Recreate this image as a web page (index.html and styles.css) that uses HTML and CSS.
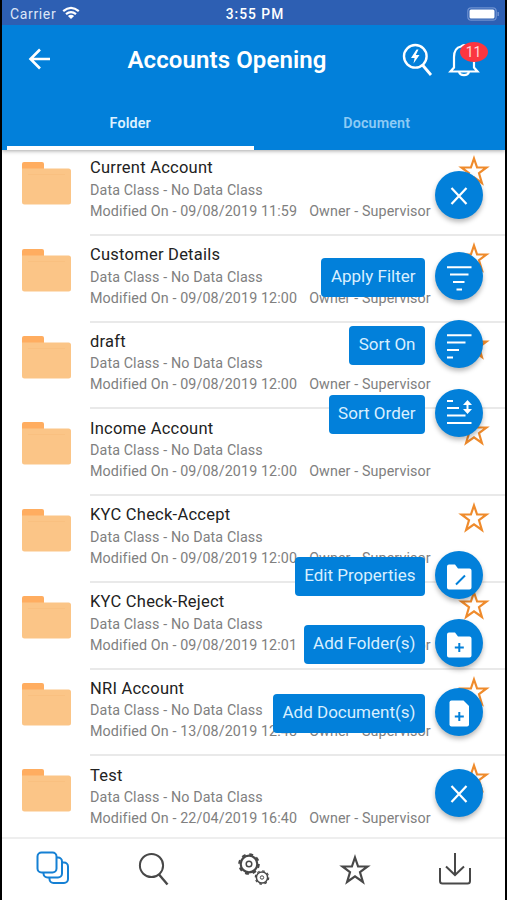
FILE: index.html
```html
<!DOCTYPE html>
<html lang="en">
<head>
<meta charset="utf-8">
<title>Accounts Opening</title>
<link rel="stylesheet" href="styles.css">
</head>
<body>
<svg class="defs" width="0" height="0" aria-hidden="true">
  <symbol id="folder" viewBox="0 0 50 44"><path d="M2 0H20Q22 0 22 2V12H0V2Q0 0 2 0Z" fill="#ffad60"/><path d="M0 6.500H46.500Q49 6.500 49 9V40Q49 42.500 46.500 42.500H2.500Q0 42.500 0 40Z" fill="#fbc587"/><path d="M6 12.500H43" stroke="#f9c080" stroke-width="1"/></symbol>
  <symbol id="star" viewBox="0 0 32 32"><path d="M16 3.500L19.100 12.500H28.500L21 18.200L23.900 28L16 22.300L8.100 28L11 18.200L3.500 12.500H12.900Z" fill="none" stroke="currentColor" stroke-width="2.200"/></symbol>
  <symbol id="close" viewBox="0 0 48 48"><path d="M16.500 17L31.500 33M31.500 17L16.500 33" fill="none" stroke="#fff" stroke-width="2.200"/></symbol>
</svg>
<div class="phone">
  <header class="top">
    <div class="status">
      <span class="carrier">Carrier
        <svg class="wifi" width="18" height="14" viewBox="0 0 18 14" fill="none" stroke="#fff" stroke-width="2.200"><path d="M1.200 5.200Q9-1.600 16.800 5.200M4 8.200Q9 3.900 14 8.200"/><path d="M9 13L5.900 10Q9 7.400 12.100 10Z" fill="#fff" stroke="none"/></svg>
      </span>
      <span class="time">3:55 PM</span>
      <svg class="battery" width="33" height="16" viewBox="0 0 33 16"><rect x=".8" y="1.800" width="28.400" height="12.400" rx="3.500" fill="none" stroke="#6e91d0" stroke-width="1.200"/><rect x="2.500" y="3.500" width="25" height="9" rx="1.500" fill="#fff"/><path d="M31.200 6V10" stroke="#6e91d0" stroke-width="1.500"/></svg>
    </div>
    <div class="bar">
      <svg class="back" width="24" height="24" viewBox="0 0 24 24" fill="none" stroke="#fff" stroke-width="2.600"><path d="M13 2.500L3.500 12L13 21.500M3.500 12H23"/></svg>
      <h1>Accounts Opening</h1>
      <svg class="quick" width="32" height="36" viewBox="0 0 32 36" fill="none" stroke="#fff" stroke-width="2.400"><circle cx="13.300" cy="15.300" r="11.300"/><path d="M20.500 24L29 34" stroke-width="2.800"/><path d="M14.500 8.500L9 17H12.600L11.500 22.500L17.500 14H13.800L16.500 8.500Z" fill="#fff" stroke="none"/></svg>
      <div class="alerts">
        <svg width="32" height="36" viewBox="0 0 32 36" fill="none" stroke="#fff" stroke-width="2.200"><path d="M2.500 29.500H29.500L26 25.500V15Q26 6 19 4.500Q16 2 13 4.500Q6 6 6 15V25.500Z"/><path d="M11 30Q12 33.200 16 33.200T21 30"/></svg>
        <span class="badge">11</span>
      </div>
    </div>
    <nav class="tabs"><a class="tab active"><span>Folder</span></a><a class="tab"><span>Document</span></a></nav>
  </header>
  <main class="list">
    <article class="row"><svg class="folder"><use href="#folder"/></svg><div class="info"><h2>Current Account</h2><p>Data Class - No Data Class</p><p class="meta"><span>Modified On - 09/08/2019 11:59</span><span>Owner - Supervisor</span></p></div><svg class="star"><use href="#star"/></svg></article>
    <article class="row"><svg class="folder"><use href="#folder"/></svg><div class="info"><h2>Customer Details</h2><p>Data Class - No Data Class</p><p class="meta"><span>Modified On - 09/08/2019 12:00</span><span>Owner - Supervisor</span></p></div><svg class="star"><use href="#star"/></svg></article>
    <article class="row"><svg class="folder"><use href="#folder"/></svg><div class="info"><h2>draft</h2><p>Data Class - No Data Class</p><p class="meta"><span>Modified On - 09/08/2019 12:00</span><span>Owner - Supervisor</span></p></div><svg class="star"><use href="#star"/></svg></article>
    <article class="row"><svg class="folder"><use href="#folder"/></svg><div class="info"><h2>Income Account</h2><p>Data Class - No Data Class</p><p class="meta"><span>Modified On - 09/08/2019 12:00</span><span>Owner - Supervisor</span></p></div><svg class="star"><use href="#star"/></svg></article>
    <article class="row"><svg class="folder"><use href="#folder"/></svg><div class="info"><h2>KYC Check-Accept</h2><p>Data Class - No Data Class</p><p class="meta"><span>Modified On - 09/08/2019 12:00</span><span>Owner - Supervisor</span></p></div><svg class="star"><use href="#star"/></svg></article>
    <article class="row"><svg class="folder"><use href="#folder"/></svg><div class="info"><h2>KYC Check-Reject</h2><p>Data Class - No Data Class</p><p class="meta"><span>Modified On - 09/08/2019 12:01</span><span>Owner - Supervisor</span></p></div><svg class="star"><use href="#star"/></svg></article>
    <article class="row"><svg class="folder"><use href="#folder"/></svg><div class="info"><h2>NRI Account</h2><p>Data Class - No Data Class</p><p class="meta"><span>Modified On - 13/08/2019 12:48</span><span>Owner - Supervisor</span></p></div><svg class="star"><use href="#star"/></svg></article>
    <article class="row"><svg class="folder"><use href="#folder"/></svg><div class="info"><h2>Test</h2><p>Data Class - No Data Class</p><p class="meta"><span>Modified On - 22/04/2019 16:40</span><span>Owner - Supervisor</span></p></div><svg class="star"><use href="#star"/></svg></article>
  </main>
  <footer class="dock">
    <svg width="34" height="34" viewBox="0 0 34 34" fill="#fff" stroke="#1580d4" stroke-width="2"><rect x="13.500" y="11.500" width="18.500" height="20.500" rx="4"/><rect x="7.500" y="6.500" width="18.500" height="20" rx="4"/><rect x="1.500" y="1.500" width="19" height="20" rx="4"/></svg>
    <svg class="i-search" width="34" height="34" viewBox="0 0 34 34" fill="none" stroke="#484848" stroke-width="2"><circle cx="14.500" cy="13.500" r="11.600"/><path d="M22 22.500L30.500 32.500" stroke-width="2.400"/></svg>
    <svg class="i-gears" width="34" height="34" viewBox="0 0 34 34" fill="none" stroke="#484848"><circle cx="12" cy="12" r="8.300" stroke-width="2.200"/><circle cx="12" cy="12" r="9.800" stroke-width="2" stroke-dasharray="3.850 3.850"/><circle cx="12" cy="12" r="2.800" stroke-width="1.500"/><circle cx="25" cy="25.500" r="5.600" stroke-width="1.500"/><circle cx="25" cy="25.500" r="6.700" stroke-width="1.200" stroke-dasharray="2.630 2.630"/><circle cx="25" cy="25.500" r="1.700"/></svg>
    <svg class="i-star" width="32" height="32"><use href="#star"/></svg>
    <svg class="i-save" width="34" height="34" viewBox="0 0 34 34" fill="none" stroke="#484848" stroke-width="2"><path d="M17 1V23M8 14.500L17 23L26 14.500"/><path d="M2 16V29Q2 31.500 4.500 31.500H29.500Q32 31.500 32 29V16"/></svg>
  </footer>
  <div class="menu">
    <div class="action"><button><svg><use href="#close"/></svg></button></div>
    <div class="action wide"><span class="label">Apply Filter</span><button><svg viewBox="0 0 48 48"><path d="M12 15.200H36.500M15 22.500H33.500M18 30H29.500M21.500 37.500H27" stroke="#fff" stroke-width="2"/></svg></button></div>
    <div class="action"><span class="label">Sort On</span><button><svg viewBox="0 0 48 48"><path d="M12 15.200H36.500M12 22.500H30.500M12 30H24M12 37.500H18" stroke="#fff" stroke-width="2"/></svg></button></div>
    <div class="action"><span class="label">Sort Order</span><button><svg viewBox="0 0 48 48"><path d="M12 12H18M12 19H24M12 26.500H30.500M12 34H36.500M32.500 14V22" stroke="#fff" stroke-width="2"/><path d="M28 16L32.500 11L37 16ZM28 20L32.500 25L37 20Z" fill="#fff"/></svg></button></div>
    <div class="action second"><span class="label">Edit Properties</span><button><svg viewBox="0 0 48 48"><path d="M12 15.500Q12 13.500 14 13.500H20L23 17.500H34.500Q36.500 17.500 36.500 19.500V36.500Q36.500 38.500 34.500 38.500H14Q12 38.500 12 36.500Z" fill="#fff"/><path d="M21 33.500L30 24.500" stroke="#0280da" stroke-width="2"/></svg></button></div>
    <div class="action"><span class="label">Add Folder(s)</span><button><svg viewBox="0 0 48 48"><path d="M12 15.500Q12 13.500 14 13.500H20L23 17.500H34.500Q36.500 17.500 36.500 19.500V36.500Q36.500 38.500 34.500 38.500H14Q12 38.500 12 36.500Z" fill="#fff"/><path d="M24.300 24V33M19.800 28.500H28.800" stroke="#0280da" stroke-width="2"/></svg></button></div>
    <div class="action"><span class="label">Add Document(s)</span><button><svg viewBox="0 0 48 48"><path d="M16.500 12.500H28.500L34 18V36.500Q34 38.500 32 38.500H16.500Q14.500 38.500 14.500 36.500V14.500Q14.500 12.500 16.500 12.500Z" fill="#fff"/><path d="M24.300 24V33M19.800 28.500H28.800" stroke="#0280da" stroke-width="2"/></svg></button></div>
    <div class="action wide"><button><svg><use href="#close"/></svg></button></div>
  </div>
</div>
</body>
</html>
```
FILE: styles.css
```css
* { box-sizing: border-box; margin: 0; padding: 0; }
body { background: #000; font-family: Roboto, "Liberation Sans", sans-serif; overflow: hidden; }
svg { display: block; flex: none; }
.defs { position: absolute; }
.phone { position: relative; display: flex; flex-direction: column; width: 503px; height: 900px; margin-left: 2px; background: #fff; overflow: hidden; }
.top { height: 150px; flex: none; background: #0280da; box-shadow: 0 1px 4px rgba(0,0,0,.35); color: #fff; z-index: 1; }
.status { display: grid; grid-template-columns: 1fr auto 1fr; align-items: center; height: 25px; padding: 2px 5px 0 8px; background: #2d5fb3; font-size: 13px; }
.carrier { display: flex; align-items: center; gap: 6px; color: #dce6f7; font-size: 14px; letter-spacing: .65px; }
.wifi { margin-top: -2px; }
.time { font-size: 13.8px; font-weight: 500; letter-spacing: 1px; }
.battery { justify-self: end; }
.bar { display: flex; align-items: center; height: 71px; padding-left: 25px; }
.back { margin-top: -3px; }
h1 { width: 202px; margin: -1px 0 0 76.500px; font-size: 24px; font-weight: 600; letter-spacing: .1px; white-space: nowrap; }
.quick { margin: -3px 0 0 72.500px; }
.alerts { position: relative; margin: -1px 0 0 14px; }
.badge { position: absolute; left: 11.500px; top: 0; width: 28px; height: 20px; border-radius: 50%; background: #fb3640; color: #ffd7d9; font-size: 14px; line-height: 20px; text-align: center; letter-spacing: 0; }
.tabs { display: grid; grid-template-columns: 1fr 1fr; height: 54px; padding: 0 5px; }
.tab { display: flex; justify-content: center; align-items: center; padding-bottom: 1px; font-size: 14.3px; font-weight: 600; letter-spacing: .15px; color: #8dcbf5; }
.tab.active { color: #ddf1ff; border-bottom: 4px solid #fff; padding: 3px 0 0; }
.list { height: 688px; flex: none; margin-top: -1px; overflow: hidden; }
.row { display: flex; height: 86.75px; padding-left: 20px; }
.folder { width: 50px; height: 44px; margin-top: 13px; }
.info { flex: 1; margin-left: 18px; padding-top: 8.3px; border-bottom: 2px solid #e9e9e9; white-space: nowrap; }
.row:last-child .info { border: 0; }
h2 { margin-bottom: .7px; font-size: 16.5px; line-height: 22px; font-weight: 400; letter-spacing: .24px; color: #222; }
.info p { font-size: 14.3px; line-height: 21px; letter-spacing: .11px; color: #808080; }
.info .meta { display: flex; gap: 12px; }
.star { width: 32px; height: 32px; margin: 6px 15px 0 -47px; color: #ef8b2c; }
.dock { display: flex; justify-content: space-between; flex: 1; padding: 12px 33px 0 34px; border-top: 2px solid #eee; color: #484848; }
.i-gears, .i-search { margin-top: 1px; }
.i-star { margin: 3px 1px 0; }
.i-save { margin-top: 1px; }
.menu { position: absolute; z-index: 2; right: 22px; top: 171px; display: flex; flex-direction: column; gap: 20.400px; }
.action { display: flex; justify-content: flex-end; align-items: center; gap: 10px; height: 48px; }
.action.wide { margin-top: 12.500px; }
.action.second { margin-top: 94px; }
.action button { width: 48px; height: 48px; border: 0; border-radius: 50%; background: #0280da; box-shadow: 0 3px 5px rgba(0,0,0,.28); }
.action button svg { width: 48px; height: 48px; }
.label { height: 39px; padding: 0 9.500px; border-radius: 4px; background: #0280da; color: #d8efff; font-size: 17px; line-height: 37px; letter-spacing: 0; margin-top: 3px; }
```
